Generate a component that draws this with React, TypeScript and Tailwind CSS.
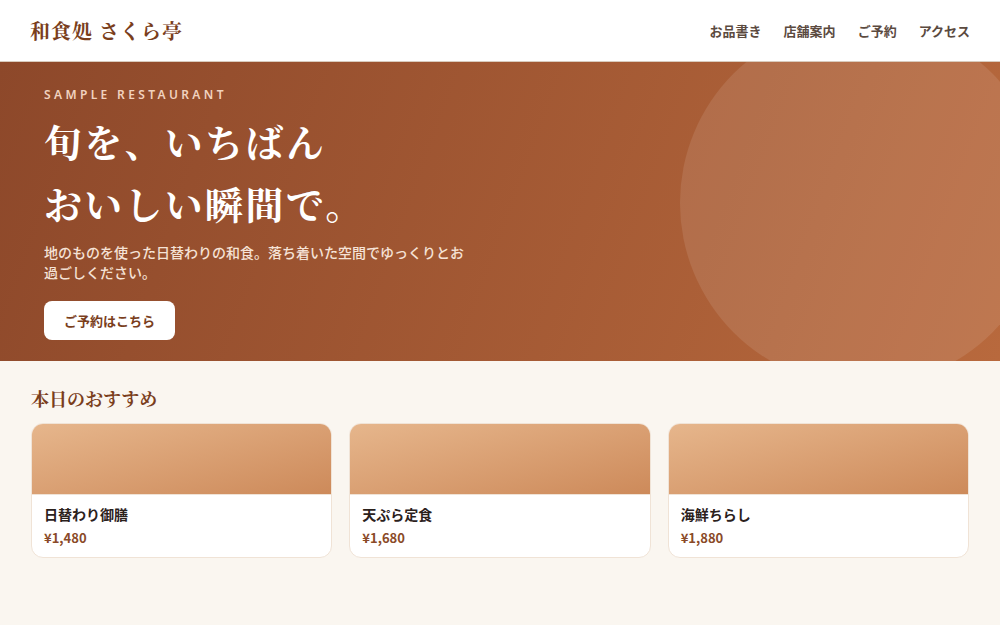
import React from "react";

const serif = "font-['Noto_Serif_CJK_JP','Noto_Serif_JP','Liberation_Serif',serif]";

const menu = [
  { name: "日替わり御膳", price: "¥1,480" },
  { name: "天ぷら定食", price: "¥1,680" },
  { name: "海鮮ちらし", price: "¥1,880" },
];

const navLinks = ["お品書き", "店舗案内", "ご予約", "アクセス"];

export default function App() {
  return (
    <div className="min-h-[625px] bg-[#faf6f0] font-['Noto_Sans_CJK_JP','Noto_Sans',sans-serif]">
      {/* header */}
      <header className="h-[62px] bg-white border-b border-[#d9cbbd] px-[30px] flex items-center justify-between">
        <div className={`${serif} text-[20px] font-bold text-[#7a3e1c] tracking-[0.05em]`}>
          和食処 さくら亭
        </div>
        <nav className="flex items-center gap-[22px] text-[13px] font-bold text-[#5b4a3f]">
          {navLinks.map((l) => (
            <a key={l} href="#">{l}</a>
          ))}
        </nav>
      </header>

      {/* hero */}
      <section className="relative overflow-hidden h-[299px] bg-[linear-gradient(110deg,#8d482a,#b8693d)] px-[44px] pt-[24px]">
        <div className="absolute right-[-46px] top-[-42px] w-[366px] h-[366px] rounded-full bg-white/10" />
        <div className="relative">
          <p className="text-[12px] font-semibold tracking-[0.28em] text-[#f1d2bf] font-['Noto_Sans',sans-serif]">
            SAMPLE RESTAURANT
          </p>
          <h1 className={`${serif} mt-[6px] text-[38px] leading-[62px] font-bold text-white tracking-[0.06em]`}>
            旬を、いちばん
            <br />
            おいしい瞬間で。
          </h1>
          <p className="mt-[8px] max-w-[424px] text-[14px] leading-[20px] font-medium text-[#f5e2d6]">
            地のものを使った日替わりの和食。落ち着いた空間でゆっくりとお過ごしください。
          </p>
          <button className="mt-[19px] h-[39px] w-[131px] rounded-lg bg-white text-[13px] font-bold text-[#7a3e1c]">
            ご予約はこちら
          </button>
        </div>
      </section>

      {/* today's picks */}
      <section className="px-[31px] pt-[24px] pb-[40px]">
        <h2 className={`${serif} text-[18px] font-bold text-[#7a3e1c]`}>本日のおすすめ</h2>
        <div className="mt-[11px] grid grid-cols-3 gap-[17px]">
          {menu.map((m) => (
            <div key={m.name} className="rounded-xl border border-[#f0e3d6] bg-white overflow-hidden">
              <div className="h-[71px] bg-gradient-to-br from-[#e6b68c] to-[#cd8a5a] border-b border-[#f0e3d6]" />
              <div className="px-[12px] pt-[9px] pb-[9px]">
                <div className="text-[14px] font-bold text-[#2b211c]">{m.name}</div>
                <div className="mt-[3px] text-[13px] font-bold text-[#8a4a28]">{m.price}</div>
              </div>
            </div>
          ))}
        </div>
      </section>
    </div>
  );
}
